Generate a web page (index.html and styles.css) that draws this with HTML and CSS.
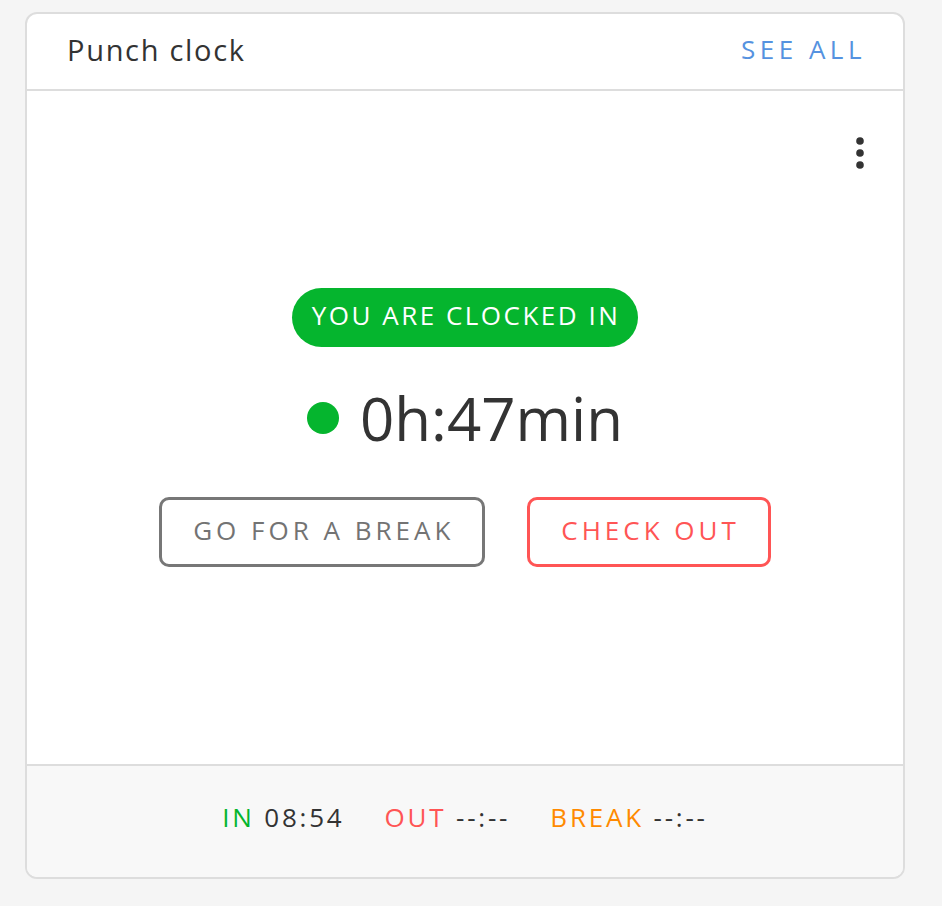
FILE: index.html
```html
<!DOCTYPE html>
<html lang="en">
  <head>
    <meta charset="UTF-8" />
    <meta name="viewport" content="width=device-width, initial-scale=1.0" />
    <title>Punch clock</title>
    <link rel="stylesheet" href="styles.css">
  </head>
  <body>
    <div class="card">
      <div class="card-header">
        <h2>Punch clock</h2>
        <a href="#" class="see-all">SEE ALL</a>
      </div>

      <div class="card-body">
        <button class="menu-btn" aria-label="More options">
          <svg width="10" height="34" viewBox="0 0 10 34">
            <circle cx="5" cy="5" r="3.8" />
            <circle cx="5" cy="17" r="3.8" />
            <circle cx="5" cy="29" r="3.8" />
          </svg>
        </button>

        <div class="status-badge">YOU ARE CLOCKED IN</div>

        <div class="timer">
          <span class="timer-dot"></span>
          <span id="timer-text">0h:47min</span>
        </div>

        <div class="actions">
          <button class="btn btn-break">GO FOR A BREAK</button>
          <button class="btn btn-out">CHECK OUT</button>
        </div>
      </div>

      <div class="card-footer">
        <span class="stamp"><span class="label-in">IN</span> 08:54</span>
        <span class="stamp"><span class="label-out">OUT</span> --:--</span>
        <span class="stamp"><span class="label-break">BREAK</span> --:--</span>
      </div>
    </div>
  </body>
</html>
```

FILE: styles.css
```css
:root {
  --green: #05b52e;
  --red: #ff5555;
  --orange: #ff8a00;
  --blue: #5592e0;
  --text: #333333;
  --muted: #737373;
  --border: #dddddd;
}

body {
  font-family: "Open Sans", "Noto Sans", sans-serif;
  margin: 0;
  padding: 12px 37px 26px 25px;
  background-color: #f5f5f5;
  color: var(--text);
}

.card {
  background-color: white;
  border: 2px solid var(--border);
  border-radius: 12px;
  overflow: hidden;
  display: flex;
  flex-direction: column;
  height: 867px;
  box-sizing: border-box;
}

.card-header {
  display: flex;
  justify-content: space-between;
  align-items: center;
  height: 77px;
  padding: 0 37px 5px 40px;
  box-sizing: border-box;
  border-bottom: 2px solid var(--border);
  flex-shrink: 0;
}

.card-header h2 {
  margin: 0;
  font-size: 29px;
  font-weight: 400;
  letter-spacing: 1.7px;
  color: var(--text);
}

.see-all {
  color: var(--blue);
  text-decoration: none;
  font-size: 26px;
  letter-spacing: 4.5px;
}

.card-body {
  position: relative;
  flex: 1;
  display: flex;
  flex-direction: column;
  align-items: center;
  justify-content: center;
}

.menu-btn {
  position: absolute;
  top: 45px;
  right: 38px;
  background: none;
  border: none;
  padding: 0;
  cursor: pointer;
  fill: var(--text);
}

.status-badge {
  background-color: var(--green);
  color: white;
  font-size: 26px;
  letter-spacing: 2.5px;
  padding: 0 18px 4px 20px;
  height: 59px;
  line-height: 55px;
  box-sizing: border-box;
  border-radius: 30px;
}

.timer {
  display: flex;
  align-items: center;
  gap: 21px;
  margin-top: 31px;
  font-size: 60px;
  line-height: 80px;
  color: var(--text);
}

.timer-dot {
  width: 32px;
  height: 32px;
  border-radius: 50%;
  background-color: var(--green);
}

.actions {
  display: flex;
  gap: 42px;
  margin-top: 39px;
}

.btn {
  font-family: inherit;
  font-size: 26px;
  letter-spacing: 4px;
  height: 70px;
  padding: 0 28px 4px 31px;
  background-color: white;
  border: 3px solid;
  border-radius: 10px;
  cursor: pointer;
}

.btn-break {
  color: var(--muted);
  border-color: #777777;
}

.btn-out {
  color: var(--red);
  border-color: var(--red);
}

.card-footer {
  display: flex;
  justify-content: center;
  align-items: center;
  gap: 40px;
  height: 113px;
  padding-bottom: 9px;
  box-sizing: border-box;
  flex-shrink: 0;
  background-color: #f8f8f8;
  border-top: 2px solid var(--border);
  font-size: 26px;
  letter-spacing: 2.8px;
  color: var(--text);
}

.label-in {
  color: var(--green);
}

.label-out {
  color: var(--red);
}

.label-break {
  color: var(--orange);
}
```
